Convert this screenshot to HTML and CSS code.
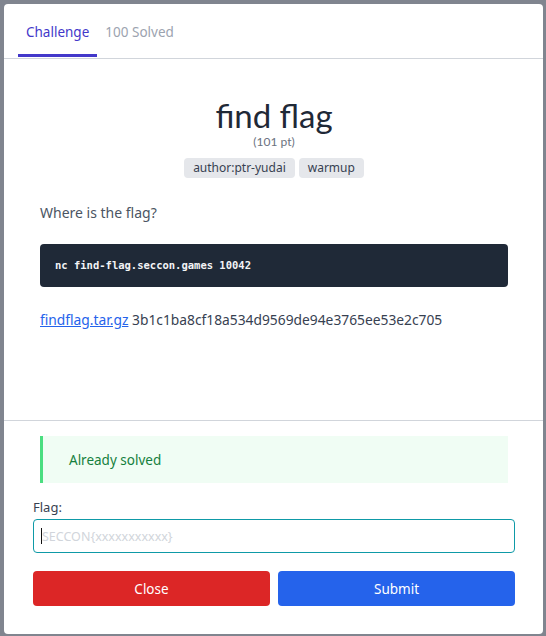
FILE: index.html
```html
<!DOCTYPE html>
<html>
<head>
<meta charset="utf-8">
<link rel="stylesheet" href="styles.css">
</head>
<body>
<div class="overlay">
  <div class="modal">
    <nav class="tabs">
      <div class="tab active">Challenge</div>
      <div class="tab">100 Solved</div>
    </nav>
    <section class="content">
      <h1 class="title">find flag</h1>
      <div class="points">(101 pt)</div>
      <div class="tags">
        <span class="tag">author:ptr-yudai</span>
        <span class="tag">warmup</span>
      </div>
      <p class="desc">Where is the flag?</p>
      <pre class="code">nc find-flag.seccon.games 10042</pre>
      <p class="file"><a class="link" href="#">findflag.tar.gz</a> 3b1c1ba8cf18a534d9569de94e3765ee53e2c705</p>
    </section>
    <section class="footer">
      <div class="alert">Already solved</div>
      <label class="label">Flag:</label>
      <div class="input"><span class="caret"></span><span class="placeholder">SECCON{xxxxxxxxxxx}</span></div>
      <div class="buttons">
        <button class="btn btn-close">Close</button>
        <button class="btn btn-submit">Submit</button>
      </div>
    </section>
  </div>
</div>
</body>
</html>
```
FILE: styles.css
```css
* { box-sizing: border-box; }
html, body { margin: 0; padding: 0; }
body {
  background: #80858f;
  font-family: "Noto Sans", "Open Sans", sans-serif;
  width: 546px;
  height: 636px;
  overflow: hidden;
}
.overlay {
  padding: 4px 3px 2px 4px;
  height: 636px;
}
.modal {
  background: #fff;
  border-radius: 4px;
  height: 630px;
  display: flex;
  flex-direction: column;
}
.tabs {
  display: flex;
  padding: 0 14px;
  height: 55px;
  border-bottom: 1px solid #d1d5db;
}
.tab {
  padding: 18px 8px 0;
  font-size: 13.5px;
  color: #9ca3af;
  height: 54px;
  line-height: 20px;
}
.tab.active {
  color: #4338ca;
  border-bottom: 3px solid #4338ca;
  height: 53px;
}
.content {
  padding: 0 35px 0 36px;
  height: 362px;
  border-bottom: 1px solid #d1d5db;
}
.title {
  margin: 38px 0 0;
  text-align: center;
  font-family: Lato, "Noto Sans", sans-serif;
  font-weight: 400;
  font-size: 33px;
  line-height: 36px;
  color: #1f2937;
}
.points {
  text-align: center;
  font-family: Lato, "Noto Sans", sans-serif;
  font-size: 12px;
  line-height: 16px;
  margin-top: 1px;
  color: #6b7280;
}
.tags {
  display: flex;
  justify-content: center;
  gap: 4px;
  margin-top: 8px;
}
.tag {
  background: #e5e7eb;
  border-radius: 4px;
  font-size: 12px;
  line-height: 20px;
  padding: 0 9px;
  color: #374151;
}
.desc {
  margin: 25px 0 0;
  font-size: 14px;
  line-height: 20px;
  color: #4b5563;
}
.code {
  margin: 21px 0 0;
  background: #1f2937;
  color: #f3f4f6;
  border-radius: 4px;
  padding: 0 15px;
  height: 43px;
  display: flex;
  align-items: center;
  font-family: "DejaVu Sans Mono", "Liberation Mono", monospace;
  font-weight: 700;
  font-size: 10.5px;
  line-height: 17px;
}
.file {
  margin: 23px 0 0;
  font-size: 13.8px;
  line-height: 20px;
  color: #374151;
}
.link {
  color: #2563eb;
  text-decoration: underline;
}
.footer {
  padding: 15px 28px 0 29px;
  display: flex;
  flex-direction: column;
}
.alert {
  margin: 0 7px 0 7px;
  background: #f0fdf4;
  border-left: 3px solid #4ade80;
  color: #15803d;
  font-size: 13.5px;
  line-height: 20px;
  padding: 14px 26px 13px;
  height: 47px;
}
.label {
  margin-top: 15px;
  font-size: 13px;
  line-height: 18px;
  color: #374151;
}
.input {
  margin-top: 3px;
  height: 34px;
  border: 1px solid #0e9aa7;
  border-radius: 4px;
  display: flex;
  align-items: center;
  padding-left: 7px;
}
.caret {
  width: 1px;
  height: 16px;
  background: #111;
}
.placeholder {
  font-size: 12.5px;
  color: #d1d5db;
}
.buttons {
  display: flex;
  gap: 8px;
  margin-top: 18px;
}
.btn {
  flex: 1;
  height: 35px;
  border: none;
  border-radius: 4px;
  color: #fff;
  font-family: "Noto Sans", "Open Sans", sans-serif;
  font-size: 13.5px;
}
.btn-close { background: #dc2626; }
.btn-submit { background: #2563eb; }
```
